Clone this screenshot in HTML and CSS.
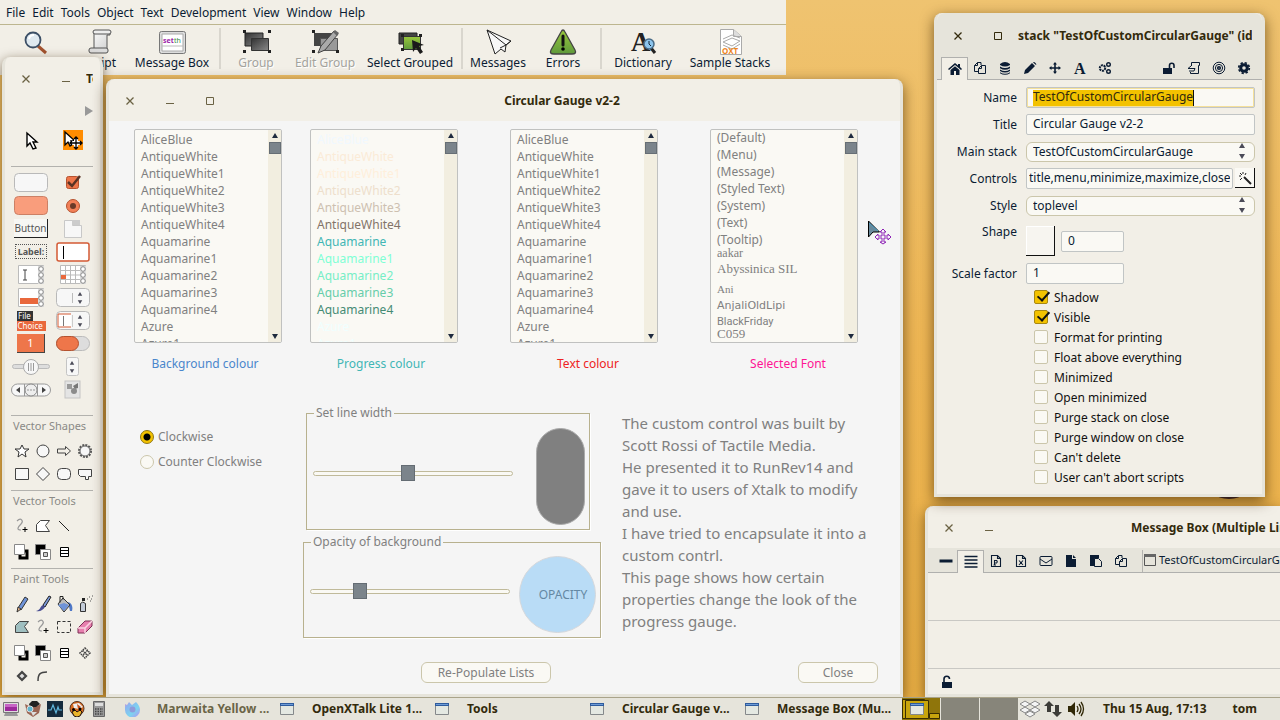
FILE: index.html
```html
<!DOCTYPE html>
<html lang="en">
<head>
<meta charset="utf-8">
<title>Desktop</title>
<link rel="stylesheet" href="styles.css">
</head>
<body>
<svg class="defs" aria-hidden="true">
  <defs>
    <linearGradient id="dark" x2="1" y2="1"><stop offset="0" stop-color="#333"/><stop offset="1" stop-color="#888"/></linearGradient>
    <linearGradient id="green" x2="0" y2="1"><stop offset="0" stop-color="#98c63c"/><stop offset="1" stop-color="#5f9a3c"/></linearGradient>
    <linearGradient id="paper" x2="1" y2="1"><stop offset="0" stop-color="#fff"/><stop offset="1" stop-color="#ccc"/></linearGradient>
    <linearGradient id="fox" x2="1" y2="1"><stop offset="0" stop-color="#f08fc8"/><stop offset=".2" stop-color="#8cb4f0"/><stop offset=".6" stop-color="#7cd4f0"/><stop offset="1" stop-color="#b98cf0"/></linearGradient>
    <symbol id="x" viewBox="0 0 10 10"><path d="M1.500 1.500l7 7m0-7l-7 7" stroke="currentColor" stroke-width="1.300"/></symbol>
    <symbol id="min" viewBox="0 0 10 10"><path d="M1 7.500h8" stroke="currentColor"/></symbol>
    <symbol id="max" viewBox="0 0 10 10"><path d="M1.500 1.500h7v7h-7z" stroke="currentColor" fill="none"/></symbol>
    <symbol id="win" viewBox="0 0 14 12"><path d="M.5 .5h13v11H.5z" fill="#e4e8e2" stroke="#85888a"/><path d="M0 0h14v3H0z" fill="#2f5c9e"/><path d="M1 1h12v1H1z" fill="#6d9bd6"/></symbol>
    <symbol id="copy" viewBox="0 0 14 14"><path d="M5 10.500H1.500v-6l3-3H8V4M4.500 1.500v3h-3M5.500 12.500v-5l3-3h4v8zM8.500 4.500v3h-3" fill="none" stroke="currentColor"/></symbol>
    <symbol id="unlock" viewBox="0 0 14 14"><path d="M1 7h9v6H1z" fill="currentColor"/><path d="M7.500 7V4.500a2.200 2.200 0 0 1 4.500 0V7" fill="none" stroke="currentColor" stroke-width="1.600"/></symbol>
    <symbol id="curve" viewBox="0 0 18 18"><path d="M4 4c4-4 7 0 4 3s-5 6 0 6" fill="none" stroke="#999" stroke-width="1.200"/><path d="M12 10v5m-2.500-2.500h5" stroke="#000"/></symbol>
    <symbol id="fore" viewBox="0 0 18 18"><path d="M7 8h7v7H7z" fill="none" stroke="#000" stroke-width="3"/><path d="M1.500 1.500h10v10h-10z" fill="#fff" stroke="#888"/></symbol>
    <symbol id="back" viewBox="0 0 18 18"><path d="M1.500 1.500h10v10h-10z" fill="#000" stroke="#888"/><path d="M6.500 6.500h10v10h-10z" fill="#fff" stroke="#888"/><path d="M9.500 9.500h4v4h-4z" fill="#ccc" stroke="#555"/></symbol>
    <symbol id="lines" viewBox="0 0 18 18"><path d="M5.500 4.500h8v9h-8zM5 7.500h9M5 10.500h9" fill="#fff" stroke="#000"/></symbol>
    <symbol id="spin" viewBox="0 0 8 16"><path d="M4 0l3 5H1zM4 16l3-5H1z" fill="#4b4b58"/></symbol>
    <symbol id="beads" viewBox="0 0 6 18"><path d="M0 0h6v18H0z" fill="#ddd"/><circle cx="3" cy="3" r="2.300" fill="#fff" stroke="#888"/><circle cx="3" cy="9" r="2.300" fill="#fff" stroke="#888"/><circle cx="3" cy="15" r="2.300" fill="#fff" stroke="#888"/></symbol>
    <symbol id="up" viewBox="0 0 8 8"><path d="M4 1l3 5H1z" fill="#1e2a3e"/></symbol>
    <symbol id="down" viewBox="0 0 8 8"><path d="M4 7l3-5H1z" fill="#1e2a3e"/></symbol>
  </defs>
</svg>

<main class="desktop">
  <svg class="wallpaper-dot" viewBox="0 0 28 10" aria-hidden="true"><ellipse cx="14" cy="4" rx="13" ry="5" fill="#2d1d33"/></svg>

  <section class="window ide">
    <nav class="menubar">
      <button>File</button><button>Edit</button><button>Tools</button><button>Object</button><button>Text</button><button>Development</button><button>View</button><button>Window</button><button>Help</button>
    </nav>
    <div class="toolbar">
      <button><svg viewBox="0 0 28 28"><path d="M17 18l8 7" stroke="#a3532f" stroke-width="3"/><circle cx="12" cy="12" r="7.500" fill="#dfe9f0" stroke="#3c4f66" stroke-width="1.800"/><path d="M8 11a5 5 0 0 1 5-4" fill="none" stroke="#fff" stroke-width="2"/></svg>Inspector</button>
      <button><svg viewBox="0 0 28 28"><path d="M8 3h16v4h-3v17H4v-3h4z" fill="url(#paper)" stroke="#555"/><rect x="3" y="20" width="19" height="5" rx="2" fill="#ddd" stroke="#555"/><rect x="7" y="2" width="18" height="4" rx="2" fill="#eee" stroke="#555"/></svg>Script</button>
      <button><svg viewBox="0 0 28 28"><rect x="1.500" y="3.500" width="26" height="22" rx="2" fill="#ddd" stroke="#777"/><path d="M4 6h21v17H4z" fill="#fff" stroke="#aaa"/><path d="M4 18h21" stroke="#bbb"/><text x="5" y="15" class="t-set">set</text><text x="16" y="15" class="t-the">th</text></svg>Message Box</button>
      <i class="sep"></i>
      <button disabled><svg viewBox="0 0 28 28"><path d="M3 5h18v13H3z" fill="url(#dark)" stroke="#222"/><path d="M9.500 10.500h17v12h-17z" fill="url(#dark)" stroke="#333"/><path d="M1 2h3v3H1zM26 2h3v3h-3zM1 22h3v3H1zM26 22h3v3h-3z" fill="#222"/></svg>Group</button>
      <button disabled><svg viewBox="0 0 28 28"><path d="M3 5h18v13H3z" fill="#444"/><path d="M9.500 10.500h17v12h-17z" fill="#999" stroke="#555"/><path d="M1 2h3v3H1zM1 22h3v3H1zM25 22h3v3h-3z" fill="#222"/><path d="M7 25l3-7L23 3l4 3-13 16z" fill="#aaa" stroke="#444"/><path d="M22 4l2-2 4 3-2 3z" fill="#666"/></svg>Edit Group</button>
      <button><svg viewBox="0 0 28 28"><path d="M3 5h18v11H3z" fill="#444" stroke="#222"/><path d="M7.500 8.500h17v13h-17z" fill="url(#green)" stroke="#333"/><path d="M5 6h3v3H5zM23 6h3v3h-3zM5 20h3v3H5z" fill="#222"/><path d="M16 12l12 5-5 1 4 6-3 2-4-6-3 4z" fill="#1b1b1b"/></svg>Select Grouped</button>
      <i class="sep"></i>
      <button><svg viewBox="0 0 28 28"><path d="M3 2l24 11-5 4-1 7-4-3-6 5z" fill="#f8f8f8" stroke="#222"/><path d="M3 2l19 15-6 3M22 17l5-4" fill="none" stroke="#222"/></svg>Messages</button>
      <button><svg viewBox="0 0 28 28"><path d="M12 4q2-4 4 0l10 18q2 4-3 4H5q-5 0-3-4z" fill="url(#green)" stroke="#444" stroke-width="1.300"/><path d="M14 8v9" stroke="#111" stroke-width="3" stroke-linecap="round"/><circle cx="14" cy="21" r="1.800"/></svg>Errors</button>
      <i class="sep"></i>
      <button><svg viewBox="0 0 28 28"><text x="2" y="23" class="t-a">A</text><path d="M22 20l4 5" stroke="#222" stroke-width="3"/><circle cx="20" cy="16" r="5" fill="#8cc4ec" stroke="#496b86" stroke-width="1.500"/><path d="M20 13v3l2 2" stroke="#123" fill="none"/></svg>Dictionary</button>
      <button><svg viewBox="0 0 28 28"><path d="M4.500 1.500h13l8 7v18h-21z" fill="#fff" stroke="#aaa"/><path d="M17.500 1.500v7h8" fill="#ddd" stroke="#aaa"/><path d="M7 14l9-4 8 3-8 5zM7 11l9-4 8 3M7 17l9 4 8-5" fill="none" stroke="#aaa"/><text x="6" y="26" class="t-oxt">OXT</text></svg>Sample Stacks</button>
    </div>
  </section>

  <section class="window tools">
    <header class="titlebar"><button class="wb" aria-label="Close tools"><svg><use href="#x"/></svg></button><button class="wb" aria-label="Minimize tools"><svg><use href="#min"/></svg></button><h2>Tools</h2></header>
    <div class="tools-body">
      <button class="expand" aria-label="Expand"><svg viewBox="0 0 8 10"><path d="M0 0l8 5-8 5z" fill="#999"/></svg></button>
      <div class="pair pointers">
        <button aria-label="Run"><svg width="20" height="20" viewBox="0 0 20 20"><path d="M6 3v13l3-3 3 6 3-1-3-6h4z" fill="#fff" stroke="#000" stroke-width="1.400"/></svg></button>
        <button aria-label="Edit" class="chosen"><svg width="20" height="20" viewBox="0 0 20 20"><path d="M2 2v13l3-3 2 4 3-2-2-3h4z" fill="#fff" stroke="#000" stroke-width="1.300"/><path d="M13 8v10M8 13h10" stroke="#fff" stroke-width="4"/><path d="M13 8v10M8 13h10M11 9l2-2 2 2M11 17l2 2 2-2M9 11l-2 2 2 2M17 11l2 2-2 2" fill="none" stroke="#000" stroke-width="1.300"/></svg></button>
      </div>
      <hr>
      <div class="pair">
        <button aria-label="Push button"><svg width="34" height="20"><rect x=".5" y=".5" width="33" height="18" rx="4" fill="#f7f7f7" stroke="#b9b9b9"/></svg></button>
        <button aria-label="Check box"><svg width="18" height="18"><rect x="2.500" y="2.500" width="12" height="12" rx="2" fill="#ee764a" stroke="#b5522f"/><path d="M4 8l4 4 8-10" fill="none" stroke="#5a3325" stroke-width="2.500"/></svg></button>
        <button aria-label="Default button"><svg width="34" height="20"><rect x=".5" y=".5" width="33" height="18" rx="4" fill="#f99d7c" stroke="#cc8065"/></svg></button>
        <button aria-label="Radio button"><svg width="16" height="16"><circle cx="8" cy="8" r="6.500" fill="#f28057" stroke="#b5522f"/><circle cx="8" cy="8" r="3" fill="#6b3a28"/></svg></button>
        <button class="raised">Button</button>
        <button aria-label="Tab panel"><svg width="20" height="20"><path d="M1.500 1.500h8v5h9v12h-17z" fill="#f7f7f7" stroke="#c8c8c8"/><path d="M9 1h8v5H9z" fill="#ccc"/></svg></button>
        <button class="dotted">Label:</button>
        <button aria-label="Text field"><svg width="34" height="20"><rect x="1" y="1" width="32" height="18" rx="2" fill="#fff" stroke="#d35a35" stroke-width="1.500"/><path d="M7.500 4v13" stroke="#000"/></svg></button>
        <button aria-label="Scrolling field"><svg width="27" height="20"><path d="M.5 .5h25v18H.5z" fill="#fff" stroke="#bbb"/><path d="M5 5h4M7 5v10M5 15h4" stroke="#444" fill="none"/><use href="#beads" x="20" y="1" width="6" height="18"/></svg></button>
        <button aria-label="Table field"><svg width="27" height="20"><path d="M.5 .5h25v18H.5zM5.500 1v18M10.500 1v18M15.500 1v18M0 5.500h20M0 10h20M0 14.500h20" fill="#fff" stroke="#bbb"/><path d="M1 10h5v4H1z" fill="#e9683c"/><use href="#beads" x="20" y="1" width="6" height="18"/></svg></button>
        <button aria-label="List field"><svg width="27" height="20"><path d="M.5 .5h25v18H.5z" fill="#fff" stroke="#bbb"/><path d="M2 10h18v6H2z" fill="#e9683c"/><use href="#beads" x="20" y="1" width="6" height="18"/></svg></button>
        <button aria-label="Combo box"><svg width="34" height="20"><rect x=".5" y=".5" width="33" height="18" rx="4" fill="#f7f7f7" stroke="#b9b9b9"/><path d="M16.500 5v10" stroke="#bbb"/><use href="#spin" x="20" y="4" width="8" height="12"/></svg></button>
        <button class="file" aria-label="File menu"><b>File</b><span>Choice</span></button>
        <button aria-label="Option menu"><svg width="34" height="20"><rect x=".5" y=".5" width="33" height="18" rx="4" fill="#f7f7f7" stroke="#b9b9b9"/><path d="M15 3H2v13h13" fill="#fff" stroke="#d35a35"/><path d="M7.500 5v10" stroke="#777"/><path d="M16.500 4v12" stroke="#ccc"/><use href="#spin" x="20" y="4" width="8" height="12"/></svg></button>
        <button class="popup">1</button>
        <button aria-label="Switch"><svg width="34" height="16"><rect x=".5" y=".5" width="33" height="14" rx="7" fill="#ddd" stroke="#bbb"/><rect x=".5" y=".5" width="22" height="14" rx="7" fill="#ee764a" stroke="#b5522f"/></svg></button>
        <button aria-label="Slider"><svg width="38" height="18"><rect x=".5" y="6.500" width="37" height="4" rx="2" fill="#ddd" stroke="#bbb"/><circle cx="19" cy="9" r="7.500" fill="#f7f7f7" stroke="#aaa"/><path d="M16.500 5v8M19 5v8M21.500 5v8" stroke="#999"/></svg></button>
        <button aria-label="Little arrows"><svg width="14" height="20"><rect x=".5" y=".5" width="12" height="18" rx="2" fill="#f7f7f7" stroke="#c4c4c4"/><use href="#spin" x="2" y="4" width="8" height="12"/></svg></button>
        <button aria-label="Scrollbar"><svg width="40" height="14"><rect x=".5" y="1" width="39" height="12" rx="6" fill="#f7f7f7" stroke="#999"/><circle cx="20" cy="7" r="6" fill="#eee" stroke="#888"/><path d="M16 7h2m1 0h2m1 0h2M13.500 1v12M26.500 1v12" stroke="#999"/><path d="M9 4v6L5 7zM31 4v6l4-3z" fill="#444"/></svg></button>
        <button aria-label="Image"><svg width="18" height="20"><rect x="1" y="1" width="15" height="17" fill="#e4e4e4" stroke="#c4c4c4"/><path d="M3 4h5v5H3z" fill="#999"/><path d="M9 6l5-3v5l-3 1z" fill="#777"/><circle cx="10" cy="11" r="3" fill="#8b8b8b"/></svg></button>
      </div>
      <hr>
      <h3>Vector Shapes</h3>
      <div class="quad shapes">
        <button aria-label="Star"><svg viewBox="0 0 18 18"><path d="M9 3l2 4h5l-4 3 1 5-4-3-4 3 1-5-4-3h5z" fill="#fff" stroke="#333"/></svg></button>
        <button aria-label="Oval"><svg viewBox="0 0 18 18"><circle cx="9" cy="9" r="6" fill="#f7f7f7" stroke="#444"/></svg></button>
        <button aria-label="Arrow"><svg viewBox="0 0 18 18"><path d="M2.500 7h8V4.500L15.500 9l-5 4.500V11h-8z" fill="none" stroke="#444"/></svg></button>
        <button aria-label="Burst"><svg viewBox="0 0 18 18"><circle cx="9" cy="9" r="6" fill="none" stroke="#555" stroke-width="2" stroke-dasharray="2 1.100"/><circle cx="9" cy="9" r="5" fill="#f7f7f7" stroke="#666"/></svg></button>
        <button aria-label="Rectangle"><svg viewBox="0 0 18 18"><path d="M2.500 3.500h13v11h-13z" fill="#f7f7f7" stroke="#444"/></svg></button>
        <button aria-label="Diamond"><svg viewBox="0 0 18 18"><path d="M9 2.500l6.500 6.500L9 15.500 2.500 9z" fill="#f7f7f7" stroke="#444"/></svg></button>
        <button aria-label="Rounded rectangle"><svg viewBox="0 0 18 18"><rect x="2.500" y="3.500" width="13" height="11" rx="4" fill="#f7f7f7" stroke="#444"/></svg></button>
        <button aria-label="Callout"><svg viewBox="0 0 18 18"><path d="M2.500 4.500h13v7h-3v3h-3v-3h-5l-2-2z" fill="#f7f7f7" stroke="#444"/></svg></button>
      </div>
      <hr>
      <h3>Vector Tools</h3>
      <div class="quad tall">
        <button aria-label="Curve"><svg><use href="#curve"/></svg></button>
        <button aria-label="Polygon"><svg viewBox="0 0 18 18"><path d="M2.500 14.500v-7l4-4h9l-4 5 4 6z" fill="#fff" stroke="#444"/></svg></button>
        <button aria-label="Line"><svg viewBox="0 0 18 18"><path d="M4 4l10 10" stroke="#222"/></svg></button><i></i>
        <button aria-label="Fill colour"><svg><use href="#fore"/></svg></button>
        <button aria-label="Line colour"><svg><use href="#back"/></svg></button>
        <button aria-label="Line size"><svg><use href="#lines"/></svg></button><i></i>
      </div>
      <hr>
      <h3>Paint Tools</h3>
      <div class="quad paint">
        <button aria-label="Pencil"><svg viewBox="0 0 18 18"><path d="M5 13l7-11 3 2-7 11z" fill="#6f93d8" stroke="#333"/><path d="M5 12l3 2-4 3z" fill="#e8b58a" stroke="#333"/></svg></button>
        <button aria-label="Brush"><svg viewBox="0 0 18 18"><path d="M9 10l6-9 2 1-6 10z" fill="#7b98d8" stroke="#222"/><path d="M2 16c5-1 4-5 7-6l2 2c-2 3-5 5-9 4z" fill="#4a4f93"/></svg></button>
        <button aria-label="Bucket"><svg viewBox="0 0 18 18"><path d="M13 7c4 1 5 5 4 9h-2z" fill="#4f78c8"/><path d="M3 9l5-6 7 7-6 7z" fill="#bbb" stroke="#333"/><path d="M3 10l6-2 5 2-5 6z" fill="#6f93d8"/><path d="M5 1.500v6M5 1.500h3v3" stroke="#222" fill="none"/></svg></button>
        <button aria-label="Spray"><svg viewBox="0 0 18 18"><path d="M4.500 8.500q2-3 5 0v8h-5z" fill="#c4ccd8" stroke="#333"/><path d="M6 3h3v3H6z" fill="#222"/><path d="M11 4h1m1-2h1m1 2h1m-2 2h1m1-5h1" stroke="#555"/></svg></button>
        <button aria-label="Paint polygon"><svg viewBox="0 0 18 18"><path d="M2.500 14.500v-7l4-4h9l-4 5 4 6z" fill="#9fbfc0" stroke="#444"/></svg></button>
        <button aria-label="Paint curve"><svg><use href="#curve"/></svg></button>
        <button aria-label="Select"><svg viewBox="0 0 18 18"><path d="M2.500 3.500h13v11h-13z" fill="none" stroke="#333" stroke-dasharray="3 2"/></svg></button>
        <button aria-label="Eraser"><svg viewBox="0 0 18 18"><path d="M2 10l7-7h7v5l-7 7H2z" fill="#e77fae" stroke="#7c3055"/><path d="M2 10h7l7-7M9 10v5" stroke="#f9d3e2" stroke-width="1.500" fill="none"/></svg></button>
      </div>
      <div class="quad">
        <button aria-label="Paint fill"><svg><use href="#fore"/></svg></button>
        <button aria-label="Paint line"><svg><use href="#back"/></svg></button>
        <button aria-label="Paint size"><svg><use href="#lines"/></svg></button>
        <button aria-label="Brush shape"><svg viewBox="0 0 18 18"><path d="M9 4l5 5-5 5-5-5zM6.500 6.500l5 5M11.500 6.500l-5 5" fill="none" stroke="#444" stroke-dasharray="1.500 .8" stroke-width="1.500"/></svg></button>
        <button aria-label="Centred"><svg viewBox="0 0 18 18"><path d="M9 5l4 4-4 4-4-4z" fill="#ddd" stroke="#444" stroke-width="2.200"/></svg></button>
        <button aria-label="Rounded"><svg viewBox="0 0 18 18"><path d="M4 14c0-7 2-9 9-9" fill="none" stroke="#444" stroke-width="1.500"/></svg></button>
      </div>
    </div>
  </section>

  <section class="window message">
    <header class="titlebar"><button class="wb" aria-label="Close message box"><svg><use href="#x"/></svg></button><button class="wb" aria-label="Minimize message box"><svg><use href="#min"/></svg></button><h2>Message Box (Multiple Lines)</h2></header>
    <div class="tabs msg-tabs">
      <button aria-label="Single line"><svg viewBox="0 0 14 14"><path d="M.5 5.500h13v3H.5z" fill="currentColor"/></svg></button>
      <button aria-label="Multiple lines" class="active"><svg viewBox="0 0 14 14"><path d="M.5 1.500h13M.5 5h13M.5 8.500h13M.5 12h13" stroke="currentColor" stroke-width="1.600"/></svg></button>
      <button aria-label="Properties"><svg viewBox="0 0 14 14"><path d="M2.500 1.500h6l3 3v8h-9zM8.500 1.500v3h3M5.500 11V6.500h2q1.500 1.200 0 2.500h-2M4.500 11h2.500" fill="none" stroke="currentColor" stroke-width="1.100"/></svg></button>
      <button aria-label="Variables"><svg viewBox="0 0 14 14"><path d="M2.500 1.500h6l3 3v8h-9zM8.500 1.500v3h3M5 6.500l4 4.500m0-4.500L5 11" fill="none" stroke="currentColor" stroke-width="1.100"/></svg></button>
      <button aria-label="Messages"><svg viewBox="0 0 14 14"><rect x="1" y="2.500" width="12" height="9" rx="1" fill="none" stroke="currentColor"/><path d="M1 5l6 4 6-4" fill="none" stroke="currentColor"/></svg></button>
      <button aria-label="New"><svg viewBox="0 0 14 14"><path d="M2 1h6v4h4v8H2z" fill="currentColor"/><path d="M9 1l3 3H9z" fill="currentColor"/></svg></button>
      <button aria-label="Paste"><svg viewBox="0 0 14 14"><path d="M1 1h9v3H6v8H1z" fill="currentColor"/><path d="M5.500 4.500h4l3 3v5h-7z" fill="#e6e4db" stroke="currentColor"/></svg></button>
      <button aria-label="Copy"><svg><use href="#copy"/></svg></button>
      <span class="target"><svg viewBox="0 0 14 14"><path d="M1.500 1.500h11v11h-11z" fill="none" stroke="#555"/><path d="M1 1h12v3H1z" fill="#666"/></svg>TestOfCustomCircularGauge</span>
    </div>
    <div class="msg-pane"></div>
    <div class="msg-pane"></div>
    <div class="msg-foot"><button aria-label="Lock"><svg viewBox="0 0 12 14"><path d="M1 7h10v6H1z" fill="currentColor"/><path d="M3 7V4a2.700 2.700 0 0 1 5.500 0" fill="none" stroke="currentColor" stroke-width="1.600"/></svg></button></div>
  </section>

  <section class="window inspector">
    <header class="titlebar"><button class="wb" aria-label="Close inspector"><svg><use href="#x"/></svg></button><button class="wb" aria-label="Maximize inspector"><svg><use href="#max"/></svg></button><h2>stack "TestOfCustomCircularGauge" (id</h2></header>
    <div class="tabs">
      <button class="active" aria-label="Basic"><svg viewBox="0 0 14 14"><path d="M7 1L0 7l1 1 6-5 6 5 1-1-2-2V2h-2v1.500z" fill="currentColor"/><path d="M2.500 8L7 4.300 11.500 8v5H8V9H6v4H2.500z" fill="currentColor"/></svg></button>
      <button aria-label="Copy"><svg><use href="#copy"/></svg></button>
      <button aria-label="Data"><svg viewBox="0 0 14 14"><path d="M2 3q5-4 10 0v1q-5 3-10 0zM2 5.500q5 3 10 0v1.700q-5 3-10 0zM2 8.500q5 3 10 0v1.500q-5 3-10 0zM2 11.200q5 3 10 0v1q-5 3-10 0z" fill="currentColor"/></svg></button>
      <button aria-label="Edit"><svg viewBox="0 0 14 14"><path d="M1 13l1-4 7-7 3 3-7 7zM10 1.500q1-1 2.500.5t.5 2z" fill="currentColor"/></svg></button>
      <button aria-label="Position"><svg viewBox="0 0 14 14"><path d="M7 2v10M2 7h10" stroke="currentColor" stroke-width="1.600"/><path d="M7 1l2 2.500H5zM7 13l2-2.500H5zM1 7l2.500-2v4zM13 7l-2.500-2v4z" fill="currentColor"/></svg></button>
      <button aria-label="Text"><svg viewBox="0 0 14 14"><text x="1" y="13" class="t-font">A</text></svg></button>
      <button aria-label="Advanced"><svg viewBox="0 0 14 14"><circle cx="4.500" cy="7" r="2.700" fill="none" stroke="currentColor" stroke-width="2" stroke-dasharray="2 .7"/><circle cx="10.500" cy="3.500" r="1.800" fill="none" stroke="currentColor" stroke-width="1.400"/><circle cx="10.500" cy="10.500" r="1.800" fill="none" stroke="currentColor" stroke-width="1.400"/></svg></button>
      <span class="grow"></span>
      <button aria-label="Unlock"><svg><use href="#unlock"/></svg></button>
      <button aria-label="Script"><svg viewBox="0 0 14 14"><path d="M4.500 5V1.500h8v3h-1v8h-8V11M1 7.500h7M1 7.500l3-2.500M2 10h5l1-2.500" fill="none" stroke="currentColor"/></svg></button>
      <button aria-label="Target"><svg viewBox="0 0 14 14" fill="none" stroke="currentColor"><circle cx="7" cy="7" r="5.800"/><circle cx="7" cy="7" r="3.600"/><circle cx="7" cy="7" r="1.300" stroke-width="1.600"/></svg></button>
      <button aria-label="Settings"><svg viewBox="0 0 14 14"><circle cx="7" cy="7" r="3.300" fill="none" stroke="currentColor" stroke-width="3"/><circle cx="7" cy="7" r="5.300" fill="none" stroke="currentColor" stroke-width="1.700" stroke-dasharray="2.300 1.860"/></svg></button>
    </div>
    <form class="props">
      <label for="name">Name</label><input id="name" value="TestOfCustomCircularGauge" class="name">
      <label for="title">Title</label><input id="title" value="Circular Gauge v2-2">
      <label for="main">Main stack</label><span class="combo"><select id="main"><option>TestOfCustomCircularGauge</option></select><svg><use href="#spin"/></svg></span>
      <label for="controls">Controls</label><span class="with-button"><input id="controls" class="tight" value="title,menu,minimize,maximize,close"><button type="button" class="bevel" aria-label="Choose controls"><svg viewBox="0 0 14 14"><path d="M6 6l7 7" stroke="#222" stroke-width="2"/><path d="M5 1v2M1 5h2M2 2l2 2M8 2L7 4M2 9l2-2" stroke="#222"/></svg></button></span>
      <label for="style">Style</label><span class="combo"><select id="style"><option>toplevel</option></select><svg><use href="#spin"/></svg></span>
      <label for="shape" class="shape-label">Shape</label><span class="shape-row"><button type="button" class="bevel swatch" aria-label="Choose shape"></button><input id="shape" value="0" class="small"></span>
      <label for="scale">Scale factor</label><input id="scale" value="1" class="scale">
      <div class="checks">
        <label><input type="checkbox" checked>Shadow</label>
        <label><input type="checkbox" checked>Visible</label>
        <label><input type="checkbox">Format for printing</label>
        <label><input type="checkbox">Float above everything</label>
        <label><input type="checkbox">Minimized</label>
        <label><input type="checkbox">Open minimized</label>
        <label><input type="checkbox">Purge stack on close</label>
        <label><input type="checkbox">Purge window on close</label>
        <label><input type="checkbox">Can't delete</label>
        <label><input type="checkbox">User can't abort scripts</label>
      </div>
    </form>
  </section>

  <section class="window gauge">
    <header class="titlebar"><button class="wb" aria-label="Close window"><svg><use href="#x"/></svg></button><button class="wb" aria-label="Minimize window"><svg><use href="#min"/></svg></button><button class="wb" aria-label="Maximize window"><svg><use href="#max"/></svg></button><h1>Circular Gauge v2-2</h1></header>
    <div class="gauge-body">
      <div class="lists">
        <figure class="lean-left"><div class="list"><ul><li>AliceBlue</li><li>AntiqueWhite</li><li>AntiqueWhite1</li><li>AntiqueWhite2</li><li>AntiqueWhite3</li><li>AntiqueWhite4</li><li>Aquamarine</li><li>Aquamarine1</li><li>Aquamarine2</li><li>Aquamarine3</li><li>Aquamarine4</li><li>Azure</li><li>Azure1</li></ul><div class="bar"><button aria-label="Up"><svg><use href="#up"/></svg></button><i></i><button aria-label="Down"><svg><use href="#down"/></svg></button></div></div><figcaption class="blue">Background colour</figcaption></figure>
        <figure class="lean-left"><div class="list"><ul><li class="c-alice">AliceBlue</li><li class="c-aw">AntiqueWhite</li><li class="c-aw1">AntiqueWhite1</li><li class="c-aw2">AntiqueWhite2</li><li class="c-aw3">AntiqueWhite3</li><li class="c-aw4">AntiqueWhite4</li><li class="teal">Aquamarine</li><li class="c-aq1">Aquamarine1</li><li class="c-aq2">Aquamarine2</li><li class="c-aq3">Aquamarine3</li><li class="c-aq4">Aquamarine4</li><li class="c-azure">Azure</li><li class="c-azure">Azure1</li></ul><div class="bar"><button aria-label="Up"><svg><use href="#up"/></svg></button><i></i><button aria-label="Down"><svg><use href="#down"/></svg></button></div></div><figcaption class="teal">Progress colour</figcaption></figure>
        <figure class="lean-right"><div class="list"><ul><li>AliceBlue</li><li>AntiqueWhite</li><li>AntiqueWhite1</li><li>AntiqueWhite2</li><li>AntiqueWhite3</li><li>AntiqueWhite4</li><li>Aquamarine</li><li>Aquamarine1</li><li>Aquamarine2</li><li>Aquamarine3</li><li>Aquamarine4</li><li>Azure</li><li>Azure1</li></ul><div class="bar"><button aria-label="Up"><svg><use href="#up"/></svg></button><i></i><button aria-label="Down"><svg><use href="#down"/></svg></button></div></div><figcaption class="red">Text colour</figcaption></figure>
        <figure class="lean-right"><div class="list"><ul class="fonts"><li>(Default)</li><li>(Menu)</li><li>(Message)</li><li>(Styled Text)</li><li>(System)</li><li>(Text)</li><li>(Tooltip)</li><li class="f-aakar">aakar</li><li class="f-aby">Abyssinica SIL</li><li class="f-ani">Ani</li><li class="f-anj">AnjaliOldLipi</li><li class="f-black">BlackFriday</li><li class="f-c059">C059</li></ul><div class="bar"><button aria-label="Up"><svg><use href="#up"/></svg></button><i></i><button aria-label="Down"><svg><use href="#down"/></svg></button></div></div><figcaption class="pink">Selected Font</figcaption></figure>
      </div>
      <div class="settings">
        <div class="radios">
          <label><input type="radio" name="dir" checked>Clockwise</label>
          <label><input type="radio" name="dir">Counter Clockwise</label>
        </div>
        <div class="groups">
          <fieldset class="line-width"><legend>Set line width</legend><div class="row"><input type="range" min="0" max="1000" value="475" aria-label="Line width"><div class="pill"></div></div></fieldset>
          <fieldset class="opacity"><legend>Opacity of background</legend><div class="row"><input type="range" min="0" max="1000" value="228" aria-label="Opacity"><div class="disc">OPACITY</div></div></fieldset>
        </div>
        <p class="about">The custom control was built by<br>Scott Rossi of Tactile Media.<br>He presented it to RunRev14 and<br>gave it to users of Xtalk to modify<br>and use.<br>I have tried to encapsulate it into a<br>custom contrl.<br>This page shows how certain<br>properties change the look of the<br>progress gauge.</p>
      </div>
      <div class="actions"><button class="wide">Re-Populate Lists</button><button>Close</button></div>
    </div>
    <svg class="cursor" viewBox="0 0 24 24" aria-hidden="true"><path d="M1.500 1v16L6 12h6.500z" fill="#68899b" stroke="#000"/><path d="M2 3l9 8" stroke="#4b9fc4"/><path d="M16 9l3 3h-2v4h4v-2l3 3-3 3v-2h-4v4h2l-3 2-3-2h2v-4h-4v2l-3-3 3-3v2h4v-4h-2z" fill="#f5f0f8" stroke="#8d23b5"/></svg>
  </section>
</main>

<footer class="taskbar">
  <div class="launchers">
    <button aria-label="Display"><svg viewBox="0 0 16 16"><path d="M.5 1.500h15v10H.5z" fill="#ddd" stroke="#777"/><path d="M2 3h12v7H2z" fill="#9c2a9b"/><path d="M2 3h12v3H2z" fill="#c765c5"/><path d="M2 12h12l1 3H1z" fill="#999"/></svg></button>
    <button aria-label="Fox"><svg viewBox="0 0 16 16"><path d="M0 3l4 2h8l4-2-2 9-6 4-6-4z" fill="#9a6553"/><path d="M4 3l3-3h5l3 3-4 3H5z" fill="#222"/><circle cx="5" cy="8" r="3" fill="#5fb6cf" stroke="#ddd"/><path d="M6 11h6l-4 4z" fill="#ddd"/></svg></button>
    <button aria-label="System monitor"><svg viewBox="0 0 16 16"><path d="M0 0h16v16H0z" fill="#142a3c"/><path d="M1 9h3l2-5 3 8 2-6 1 3h3" fill="none" stroke="#5fb6dc" stroke-width="1.200"/></svg></button>
    <button aria-label="Orange app"><svg viewBox="0 0 16 16"><circle cx="8" cy="7.500" r="7" fill="#d86b20" stroke="#532"/><path d="M4 3l6-1 4 4-4 2-5-1z" fill="#eee"/><path d="M8 3l4 3-3 2z" fill="#c94f18"/><path d="M3 11l3-2 2 2 3-2 2 2-2 4-3 1-3-1z" fill="#e9b32a" stroke="#211"/><circle cx="4.500" cy="8.500" r="1.500"/><circle cx="11" cy="8" r="1.500"/></svg></button>
    <button aria-label="Calculator"><svg viewBox="0 0 16 16"><path d="M2.500 .5h11v15h-11z" fill="#999" stroke="#666"/><path d="M4 2h8v3H4z" fill="#ddd"/><path d="M4 8h8M4 10.500h8M4 13h8" stroke="#444" stroke-width="1.500" stroke-dasharray="1.500 1"/></svg></button>
  </div>
  <nav class="tasks">
    <button class="hidden-task"><svg viewBox="0 0 16 16"><path d="M1 3l2 1 2-3 3 3 4-3q4 4 4 8a7.500 7.500 0 0 1-15 0q0-4 0-6z" fill="url(#fox)"/><circle cx="8.500" cy="8.500" r="3" fill="#8f9ada"/></svg>Marwaita Yellow ...</button>
    <button><svg><use href="#win"/></svg>OpenXTalk Lite 1...</button>
    <button><svg><use href="#win"/></svg>Tools</button>
    <button><svg><use href="#win"/></svg>Circular Gauge v...</button>
    <button><svg><use href="#win"/></svg>Message Box (Mu...</button>
  </nav>
  <div class="pager">
    <button class="current" aria-label="Workspace 1"><svg viewBox="0 0 38 22"><path d="M.5 1.500h22v19H.5z" fill="#c8a50d" stroke="#3b2f02"/><path d="M3.500 2.500h23v18h-23z" fill="#c8a50d" stroke="#3b2f02"/><path d="M27.500 15.500h10v5h-10z" fill="#c8a50d" stroke="#3b2f02"/><use href="#win" x="8" y="5" width="14" height="12"/></svg></button>
    <button aria-label="Workspace 2"></button><button aria-label="Workspace 3"></button>
  </div>
  <div class="tray">
    <svg viewBox="0 0 20 20"><path d="M5 2l5 3-5 3-5-3zM15 2l5 3-5 3-5-3zM5 8l5 3-5 3-5-3zM15 8l5 3-5 3-5-3zM10 12l5 3-5 3-5-3z" fill="#f4f4f4" stroke="#888"/></svg>
    <svg viewBox="0 0 20 20"><path d="M4 13V7H1l5-5 5 5H8v6zM12 6v7H9l5 5 5-5h-3V6z" fill="#3d3c38"/></svg>
    <svg viewBox="0 0 20 20"><path d="M2 7h3l4-4v14l-4-4H2z" fill="#302706"/><path d="M11 7q2 3 0 6M13 5q4 5 0 10M15 3q5 7 0 14" fill="none" stroke="#302706" stroke-width="1.300"/></svg>
  </div>
  <time>Thu 15 Aug, 17:13</time>
  <span class="user">tom</span>
</footer>
</body>
</html>
```
FILE: styles.css
```css
* { box-sizing: border-box; }
body {
  margin: 0;
  height: 100vh;
  display: flex;
  flex-direction: column;
  overflow: hidden;
  font: 12px/16px "Noto Sans", sans-serif;
  color: #0b1c33;
  background: #e6ab45;
}
h1, h2, h3, p, ul, figure, fieldset { margin: 0; padding: 0; }
h1, h2 { font-size: 12px; line-height: 16px; color: #332a0c; white-space: nowrap; overflow: hidden; }
button { font: inherit; color: inherit; background: none; border: 0; padding: 0; margin: 0; }
svg { display: block; flex: none; }
.defs { width: 0; height: 0; position: absolute; }
.desktop { flex: 1; position: relative; min-height: 0; background: linear-gradient(#efc370, #edb553 50%, #eab045); }
.wallpaper-dot { position: absolute; left: 1215px; top: 490px; width: 28px; }

.window { position: absolute; background: #f2efe7; }
.titlebar { height: 42px; display: flex; align-items: center; flex: none; padding: 2px 0 0 1px; }
.wb { width: 40px; display: flex; justify-content: center; color: #6b6244; flex: none; }
.wb svg { width: 10px; height: 10px; }

/* Main IDE window */
.ide { left: 0; top: 0; width: 786px; height: 75px; }
.menubar { height: 25px; display: flex; gap: 7px; padding: 1px 6px 0; border-bottom: 1px solid #bdb68f; }
.toolbar { display: grid; height: 50px; padding-top: 3px; grid-template-columns: 70px 60px 84px 12px 60px 78px 92px 12px 60px 70px 6px 78px 96px; }
.toolbar button { display: flex; flex-direction: column; align-items: center; line-height: 14px; white-space: nowrap; height: 44px; }
.toolbar button:disabled { color: #a3a39e; text-shadow: 1px 1px 0 #fff; }
.toolbar svg { width: 28px; height: 28px; overflow: visible; }
.sep { width: 2px; height: 41px; background: #d9d6ce; justify-self: center; }
.t-set, .t-the { font: bold 7px "Noto Sans", sans-serif; fill: #9c1eaa; }
.t-the { font-weight: normal; fill: #338a44; }
.t-a { font: bold 27px/20px "Liberation Serif", serif; fill: #222; }
.t-oxt { font: bold 8px "Noto Sans", sans-serif; fill: #ee861f; }
.t-font { font: bold 16px "Liberation Serif", serif; fill: currentColor; }

/* Tool palette */
.tools { left: 2px; top: 57px; width: 101px; height: 638px; border: solid #e6e4db; border-width: 0 3px 3px; border-radius: 8px 8px 0 0; box-shadow: 0 3px 12px rgba(60, 35, 0, .6); }
.tools .titlebar { padding-right: 7px; }
.tools .titlebar h2 { min-width: 0; }
.tools-body { padding: 7px 7px 0 6px; }
.tools-body button { display: flex; align-items: center; justify-content: center; }
.tools-body .expand { margin-left: auto; height: 10px; }
.expand svg { width: 8px; height: 10px; }
.pair { display: grid; grid-template-columns: 40px 44px; grid-auto-rows: 23px; align-items: center; justify-items: center; padding: 4px 0 14px; }
.pointers { padding: 12px 0 15px; }
.chosen { background: #ff8c00; }
hr { border: 0; height: 1px; margin: 0; background: #b3b2ae; }
.raised { background: #f7f7f4; border: solid #222; border-width: 0 1px 1px 0; width: 34px; height: 19px; font-size: 10px; color: #555; }
.dotted { border: 1px dotted #555; width: 32px; height: 15px; font-size: 9px; font-weight: bold; color: #555; }
.tools-body .file { flex-direction: column; align-items: flex-start; width: 29px; font-size: 8px; line-height: 10px; color: #fff; }
.file b { background: #333; font-weight: normal; width: 16px; }
.file span { background: #e9683c; width: 29px; text-align: left; padding-left: 1px; }
.popup { width: 28px; height: 19px; background: #ee764a; border: solid #444; border-width: 0 1px 1px 0; color: #fff; font-size: 11px; }
.tools h3 { font-size: 11px; line-height: 20px; font-weight: normal; color: #8a8a86; padding-left: 2px; }
.quad { display: grid; grid-template-columns: repeat(4, 21px); grid-auto-rows: 23px; padding: 3px 0 0; }
.quad svg { width: 18px; height: 18px; }
.shapes { padding-bottom: 5px; }
.tall { grid-auto-rows: 26px; padding: 2px 0 3px; }

/* Gauge window */
.gauge { left: 106px; top: 79px; width: 797px; height: 618px; display: flex; flex-direction: column; border: solid #e6e4db; border-width: 0 3px 3px; border-radius: 8px 8px 0 0; box-shadow: 0 4px 14px rgba(60, 35, 0, .65); }
.gauge h1 { flex: 1; text-align: center; padding-right: 6px; }
.gauge-body { flex: 1; background: #f5f5f5; color: #808080; padding: 8px 22px 11px 25px; display: flex; flex-direction: column; }
.lists { display: grid; grid-template-columns: 176px 200px 200px 148px; }
figure { width: 148px; }
figcaption { text-align: center; margin-top: 13px; }
.lean-left figcaption { padding-right: 6px; }
.lean-right figcaption { padding-left: 8px; }
.list { display: flex; height: 214px; background: #faf9f4; border: 1px solid #c0c1c0; border-radius: 2px; overflow: hidden; }
.list ul { flex: 1; list-style: none; padding: 1px 6px; line-height: 17px; white-space: nowrap; }
.list .fonts { padding-top: 0; }
.fonts li:first-child { line-height: 16px; }
.bar { width: 13px; background: #f2eee0; display: flex; flex-direction: column; align-items: center; }
.bar button { height: 12px; display: flex; align-items: center; }
.bar svg { width: 8px; height: 8px; }
.bar i { height: 12px; width: 12px; background: #7b848b; border: 1px solid #666e75; margin-bottom: auto; }
.blue { color: #4a86cc; } .teal { color: #41b6b5; } .red { color: #ee2222; } .pink { color: #ff1493; }
.c-alice { color: #f0f8ff; } .c-aw { color: #faebd7; } .c-aw1 { color: #ffefdb; } .c-aw2 { color: #eedfcc; } .c-aw3 { color: #cdc0b0; } .c-aw4 { color: #837469; }
.c-aq1 { color: #7fffd4; } .c-aq2 { color: #76eec6; } .c-aq3 { color: #66cdaa; } .c-aq4 { color: #458b74; } .c-azure { color: #f0ffff; }
.f-aakar { font: 12px/10px "Liberation Serif", serif; }
.f-aby { font: 13px/22px "Liberation Serif", serif; }
.f-ani { font: 11px/18px "Liberation Serif", serif; }
.f-anj { font: 11px/15px "DejaVu Sans", sans-serif; }
.f-black { font: 11px/17px Roboto, sans-serif; }
.f-c059 { font: 13px/8px "Liberation Serif", serif; }

.settings { display: grid; grid-template-columns: 169px 319px 1fr; margin-top: 33px; }
.radios { padding: 24px 0 0 6px; display: flex; flex-direction: column; gap: 9px; }
.radios label { display: flex; align-items: center; gap: 4px; }
input[type=radio] { appearance: none; width: 14px; height: 14px; margin: 0; border: 1px solid #cbc6ab; border-radius: 50%; background: #faf9f4; }
input[type=radio]:checked { border-color: #8f7512; background: radial-gradient(circle, #000 0 3px, #f3c200 4px); }
.groups { display: flex; flex-direction: column; gap: 4px; }
fieldset { border: 1px solid #b8b18e; min-width: 0; box-shadow: 1px 1px 0 #fff; }
legend { margin-left: 7px; padding: 0 2px; line-height: 16px; }
.line-width { width: 284px; height: 125px; margin-left: 3px; }
.opacity { width: 298px; height: 104px; }
.row { display: flex; align-items: center; justify-content: space-between; padding: 7px 4px 0 6px; }
.opacity .row { padding-top: 6px; }
input[type=range] { appearance: none; width: 200px; height: 16px; margin: 0; background: none; }
.line-width input { margin-bottom: 7px; }
.opacity input { margin-bottom: 6px; }
input[type=range]::-webkit-slider-runnable-track { height: 5px; border: 1px solid #c0ba9a; border-radius: 3px; background: #faf9f4; }
input[type=range]::-webkit-slider-thumb { appearance: none; width: 14px; height: 16px; margin-top: -7px; background: #7b848b; border: 1px solid #646c73; }
.pill { width: 49px; height: 97px; border-radius: 25px; background: #808080; border: 1px solid #aaa; }
.disc { width: 77px; height: 77px; border-radius: 50%; background: #b9dcf6; border: 1px solid #d5d8dc; color: #6488a3; display: flex; align-items: center; justify-content: center; padding-left: 11px; }
.about { font-size: 15px; line-height: 22px; padding-top: 7px; white-space: nowrap; }
.actions { display: flex; justify-content: space-between; margin-top: auto; padding-left: 287px; }
.actions button { height: 21px; width: 80px; border: 1px solid #cbc6ab; border-radius: 6px; background: #faf9f4; }
.actions .wide { width: 130px; }
.cursor { position: absolute; left: 758px; top: 140px; width: 24px; height: 26px; }

/* Property inspector */
.inspector { left: 934px; top: 13px; width: 331px; height: 484px; border: solid #e6e4db; border-width: 0 3px 3px; border-radius: 8px 8px 0 0; box-shadow: 0 4px 14px rgba(60, 35, 0, .65); }
.inspector .titlebar { background: #e6e4db; height: 44px; border-radius: 8px 8px 0 0; padding-top: 1px; padding-right: 10px; }
.inspector .wb { color: #332a0c; }
.inspector h2 { flex: 1; text-align: right; }
.tabs { height: 23px; display: flex; background: #e6e4db; border-bottom: 1px solid #b0b0ae; padding: 0 6px 0 5px; }
.tabs button { width: 25px; height: 22px; display: flex; align-items: center; justify-content: center; flex: none; }
.tabs svg { width: 14px; height: 14px; }
.tabs .active { background: #f2efe7; border: 1px solid #b0b0ae; border-bottom: 0; height: 23px; width: 27px; margin: 0 -1px; }
.grow { flex: 1; }
.props { display: grid; grid-template-columns: 80px 229px; column-gap: 9px; row-gap: 6px; padding: 7px 7px 0 0; align-items: center; }
.props > label { text-align: right; line-height: 20px; }
.props input:not([type=checkbox]) { font: inherit; color: inherit; height: 21px; width: 100%; min-width: 0; border: 1px solid #c1c5c5; border-radius: 2px; background: #faf9f4; padding: 0 6px 2px; }
.props .name:not([type=checkbox]) {
  color: #30290c;
  background: linear-gradient(#111, #111) 166px 2px / 1px 16px no-repeat, linear-gradient(#f3c200, #f3c200) 6px 2px / 160px 16px no-repeat, #faf9f4;
  box-shadow: inset 0 0 0 1px #f5e09a;
}
.combo { position: relative; display: block; padding-top: 1px; }
.combo select { display: block; appearance: none; font: inherit; color: inherit; width: 100%; height: 20px; padding: 0 6px; border: 1px solid #cbc6ab; border-radius: 6px; background: #faf9f4; }
.combo svg { position: absolute; right: 9px; top: 2px; width: 8px; height: 16px; pointer-events: none; }
.with-button { display: flex; gap: 2px; }
.props .tight:not([type=checkbox]) { padding: 0 2px 2px; }
.bevel { width: 20px; height: 20px; flex: none; background: #faf9f4; border: solid #111; border-width: 0 1px 1px 0; display: flex; align-items: center; justify-content: center; }
.bevel svg { width: 14px; height: 14px; }
.shape-row { display: flex; align-items: center; gap: 6px; padding: 4px 0 1px; }
.shape-label { align-self: start; }
.swatch { width: 29px; height: 30px; background: #f7f5f0; box-shadow: inset 1px 1px 0 #fff; }
.props .small.small { width: 63px; }
.props .scale.scale { width: 98px; }
.checks { grid-column: 2; padding-left: 8px; line-height: 20px; color: #111; margin-top: -2px; }
.checks label { display: flex; align-items: center; gap: 6px; height: 20px; }
input[type=checkbox] { appearance: none; width: 14px; height: 14px; margin: 0 0 2px; border: 1px solid #cbc6ab; border-radius: 2px; background: #faf9f4; position: relative; }
input[type=checkbox]:checked { background: #f3c200; border-color: #a88812; }
input[type=checkbox]:checked::after { content: ""; position: absolute; left: 5px; top: -2px; width: 5px; height: 10px; border: solid #111; border-width: 0 2px 2px 0; transform: rotate(42deg); }

/* Message box */
.message { left: 925px; top: 506px; right: 0; bottom: 0; border: solid #e6e4db; border-width: 0 0 3px 3px; border-radius: 8px 0 0 0; box-shadow: 0 4px 14px rgba(60, 35, 0, .6); overflow: hidden; display: flex; flex-direction: column; }
.message .titlebar h2 { margin-left: 122px; overflow: visible; }
.msg-tabs { height: 25px; flex: none; padding: 2px 0 0 5px; }
.target { display: flex; align-items: center; gap: 2px; border-left: 1px solid #b5b4b0; margin-left: 9px; padding: 0 0 2px; font-size: 11px; white-space: nowrap; }
.msg-pane { flex: none; height: 48px; border-bottom: 1px solid #c9c8c4; }
.msg-foot { padding: 6px 13px; }
.msg-foot svg { width: 12px; height: 14px; }

/* Panel */
.taskbar { height: 23px; flex: none; display: flex; align-items: center; background: #e6e4db; border-top: 1px solid #a9a38a; color: #332a0c; font-weight: bold; position: relative; white-space: nowrap; }
.launchers { display: flex; gap: 6px; padding-left: 3px; width: 124px; }
.launchers svg { width: 16px; height: 16px; }
.tasks { display: grid; grid-template-columns: repeat(5, 155px); }
.tasks button { display: flex; align-items: center; gap: 18px; text-align: left; padding-left: 1px; }
.tasks svg { width: 14px; height: 12px; }
.tasks .hidden-task { color: #6b6547; padding-left: 0; }
.hidden-task svg { width: 16px; height: 16px; margin: 0 -1px 0 0; }
.pager { display: flex; gap: 1px; margin-left: 3px; }
.pager button { width: 38px; height: 22px; background: #87857a; }
.pager .current { background: #8f750b; }
.pager svg { width: 38px; height: 22px; }
.tray { display: flex; gap: 3px; padding-left: 2px; }
.tray svg { width: 20px; height: 20px; }
time { margin-left: 17px; }
.user { margin-left: 26px; }
```
